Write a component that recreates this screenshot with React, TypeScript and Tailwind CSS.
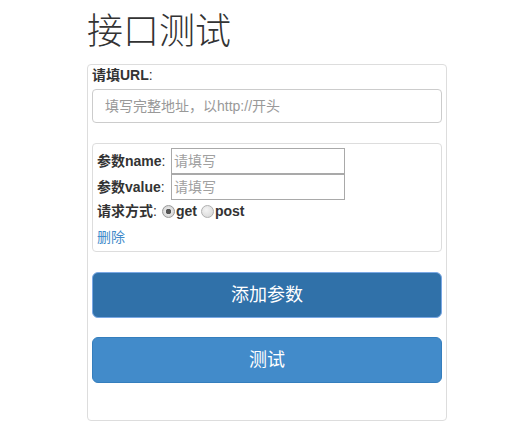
export default function App() {
  return (
    <div className="w-[521px] h-[439px] bg-white text-[#333] text-[14px] font-['Liberation_Sans','Noto_Sans_CJK_SC',sans-serif]">
      <div className="ml-[87px] w-[360px]">
        {/* Title */}
        <h1 className="pt-[12px] h-[64px] text-[36px] leading-[40px] font-extralight">接口测试</h1>

        {/* Main panel */}
        <div className="h-[357px] border border-[#ddd] rounded-[4px] px-[4px]">
          <div className="h-[20px] leading-[20px] mb-[4px]">
            <span className="font-bold">请填URL</span>:
          </div>
          <input
            className="block w-full h-[34px] border border-[#ccc] rounded-[4px] px-[12px] text-[14px] placeholder:text-[#999] outline-none"
            placeholder="填写完整地址，以http://开头"
          />

          {/* Param block */}
          <div className="mt-[20px] border border-[#ddd] rounded-[4px] p-[4px]">
            <div className="flex items-center h-[26px]">
              <span className="w-[74px] shrink-0">
                <span className="font-bold">参数name</span>:
              </span>
              <input
                className="w-[174px] h-[26px] border border-[#a9a9a9] px-[2px] text-[14px] placeholder:text-[#a0a0a0] outline-none"
                placeholder="请填写"
              />
            </div>
            <div className="flex items-center h-[26px]">
              <span className="w-[74px] shrink-0">
                <span className="font-bold">参数value</span>:
              </span>
              <input
                className="w-[174px] h-[26px] border border-[#a9a9a9] px-[2px] text-[14px] placeholder:text-[#a0a0a0] outline-none"
                placeholder="请填写"
              />
            </div>
            <div className="flex items-center h-[22px]">
              <span className="font-bold">请求方式</span>:
              <span className="ml-[5px] w-[13px] h-[13px] rounded-full border border-[#9a9a9a] bg-[radial-gradient(circle,#555_0,#555_2.5px,#e6e6e6_3px,#c8c8c8_100%)]"></span>
              <span className="font-bold ml-[1px]">get</span>
              <span className="ml-[4px] w-[13px] h-[13px] rounded-full border border-[#b0b0b0] bg-[radial-gradient(circle_at_40%_35%,#f4f4f4_0,#d4d4d4_100%)]"></span>
              <span className="font-bold ml-[1px]">post</span>
            </div>
            <div className="mt-[5px] h-[20px] leading-[20px]">
              <a className="text-[#428bca]">删除</a>
            </div>
          </div>

          {/* Buttons */}
          <button className="mt-[20px] block w-full h-[46px] rounded-[6px] bg-[#3071a9] border border-[#7aa8e4] text-white text-[18px]">
            添加参数
          </button>
          <button className="mt-[19px] block w-full h-[46px] rounded-[6px] bg-[#428bca] border border-[#357ebd] text-white text-[18px]">
            测试
          </button>
        </div>
      </div>
    </div>
  );
}
